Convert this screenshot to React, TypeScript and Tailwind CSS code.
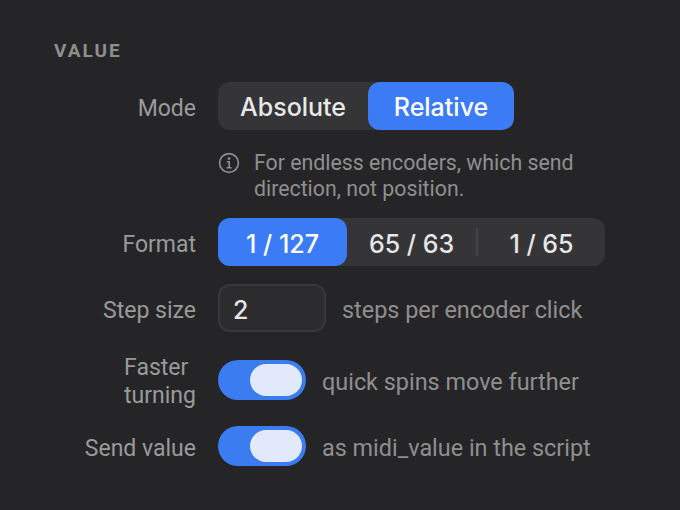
import React from "react";

function Toggle() {
  return (
    <div className="flex h-10 w-[88px] shrink-0 items-center justify-end rounded-full bg-[#3b7cf0] pr-1">
      <div className="h-8 w-[52px] rounded-full bg-[#e1e9fb]" />
    </div>
  );
}

function Label({ children, tight }: { children: React.ReactNode; tight?: boolean }) {
  return (
    <div className={`flex w-[142px] shrink-0 justify-end text-[23px] leading-7 text-[#9a9a9a] ${tight ? "pt-1" : "pt-[6px]"}`}>
      <div>{children}</div>
    </div>
  );
}

function Hint({ children }: { children: React.ReactNode }) {
  return <div className="ml-[-6px] pt-[6px] text-[23.4px] text-[#8f8f8f]">{children}</div>;
}

const controlFont = { fontFamily: "Inter, sans-serif" };

export default function App() {
  return (
    <div
      className="flex h-[510px] w-[680px] flex-col overflow-hidden bg-[#252527] pl-[54px] pt-[40px]"
      style={{ fontFamily: "Roboto, 'Noto Sans', sans-serif" }}
    >
      <div className="text-[19px] font-bold leading-[22px] tracking-[2px] text-[#8e8e8e]">VALUE</div>

      <div className="mt-5 flex items-center gap-[22px]">
        <Label>Mode</Label>
        <div className="flex h-12 w-[296px] rounded-xl bg-[#353537] text-[25px] font-medium" style={controlFont}>
          <div className="flex w-[150px] items-center justify-center pt-1 text-[#e8e8e8]">Absolute</div>
          <div className="flex w-[146px] items-center justify-center rounded-xl bg-[#3b7cf6] pt-1 text-white">Relative</div>
        </div>
      </div>

      <div className="mt-[16px] flex gap-[14px] pl-[164px] text-[21.3px] leading-[26px] text-[#8f8f8f]">
        <svg width="22" height="22" viewBox="0 0 22 22" fill="none" stroke="#8f8f8f" strokeWidth="1.6" className="mt-[6px] shrink-0">
          <circle cx="11" cy="11" r="9.4" />
          <path d="M8.8 9.8H11.2V15.6M8.6 15.8H13.6" />
          <circle cx="11" cy="6.6" r="0.6" fill="#8f8f8f" />
        </svg>
        <div className="w-[340px] pt-1">For endless encoders, which send direction, not position.</div>
      </div>

      <div className="mt-[16px] flex items-center gap-[22px]">
        <Label>Format</Label>
        <div className="flex h-12 w-[387px] items-center rounded-xl bg-[#353537] text-[25px] font-medium text-[#e6e6e6]" style={controlFont}>
          <div className="flex h-12 w-[129px] items-center justify-center rounded-xl bg-[#3b7cf6] pt-[5px] text-white">1 / 127</div>
          <div className="flex h-12 w-[129px] items-center justify-center pt-[5px]">65 / 63</div>
          <div className="h-7 w-0.5 bg-[#454547]" />
          <div className="flex h-12 flex-1 items-center justify-center pt-[5px]">1 / 65</div>
        </div>
      </div>

      <div className="mt-[18px] flex items-center gap-[22px]">
        <Label>Step size</Label>
        <div className="flex h-12 w-[108px] items-center rounded-xl border-2 border-[#38383a] bg-[#2c2c2e] pl-[13px] pt-[5px] text-[25px] font-medium text-[#e6e6e6]" style={controlFont}>2</div>
        <Hint>steps per encoder click</Hint>
      </div>

      <div className="mt-[18px] flex items-center gap-[22px]">
        <Label tight>Faster<br />turning</Label>
        <Toggle />
        <Hint>quick spins move further</Hint>
      </div>

      <div className="mt-[15px] flex items-center gap-[22px]">
        <Label>Send value</Label>
        <Toggle />
        <Hint>as midi_value in the script</Hint>
      </div>
    </div>
  );
}
